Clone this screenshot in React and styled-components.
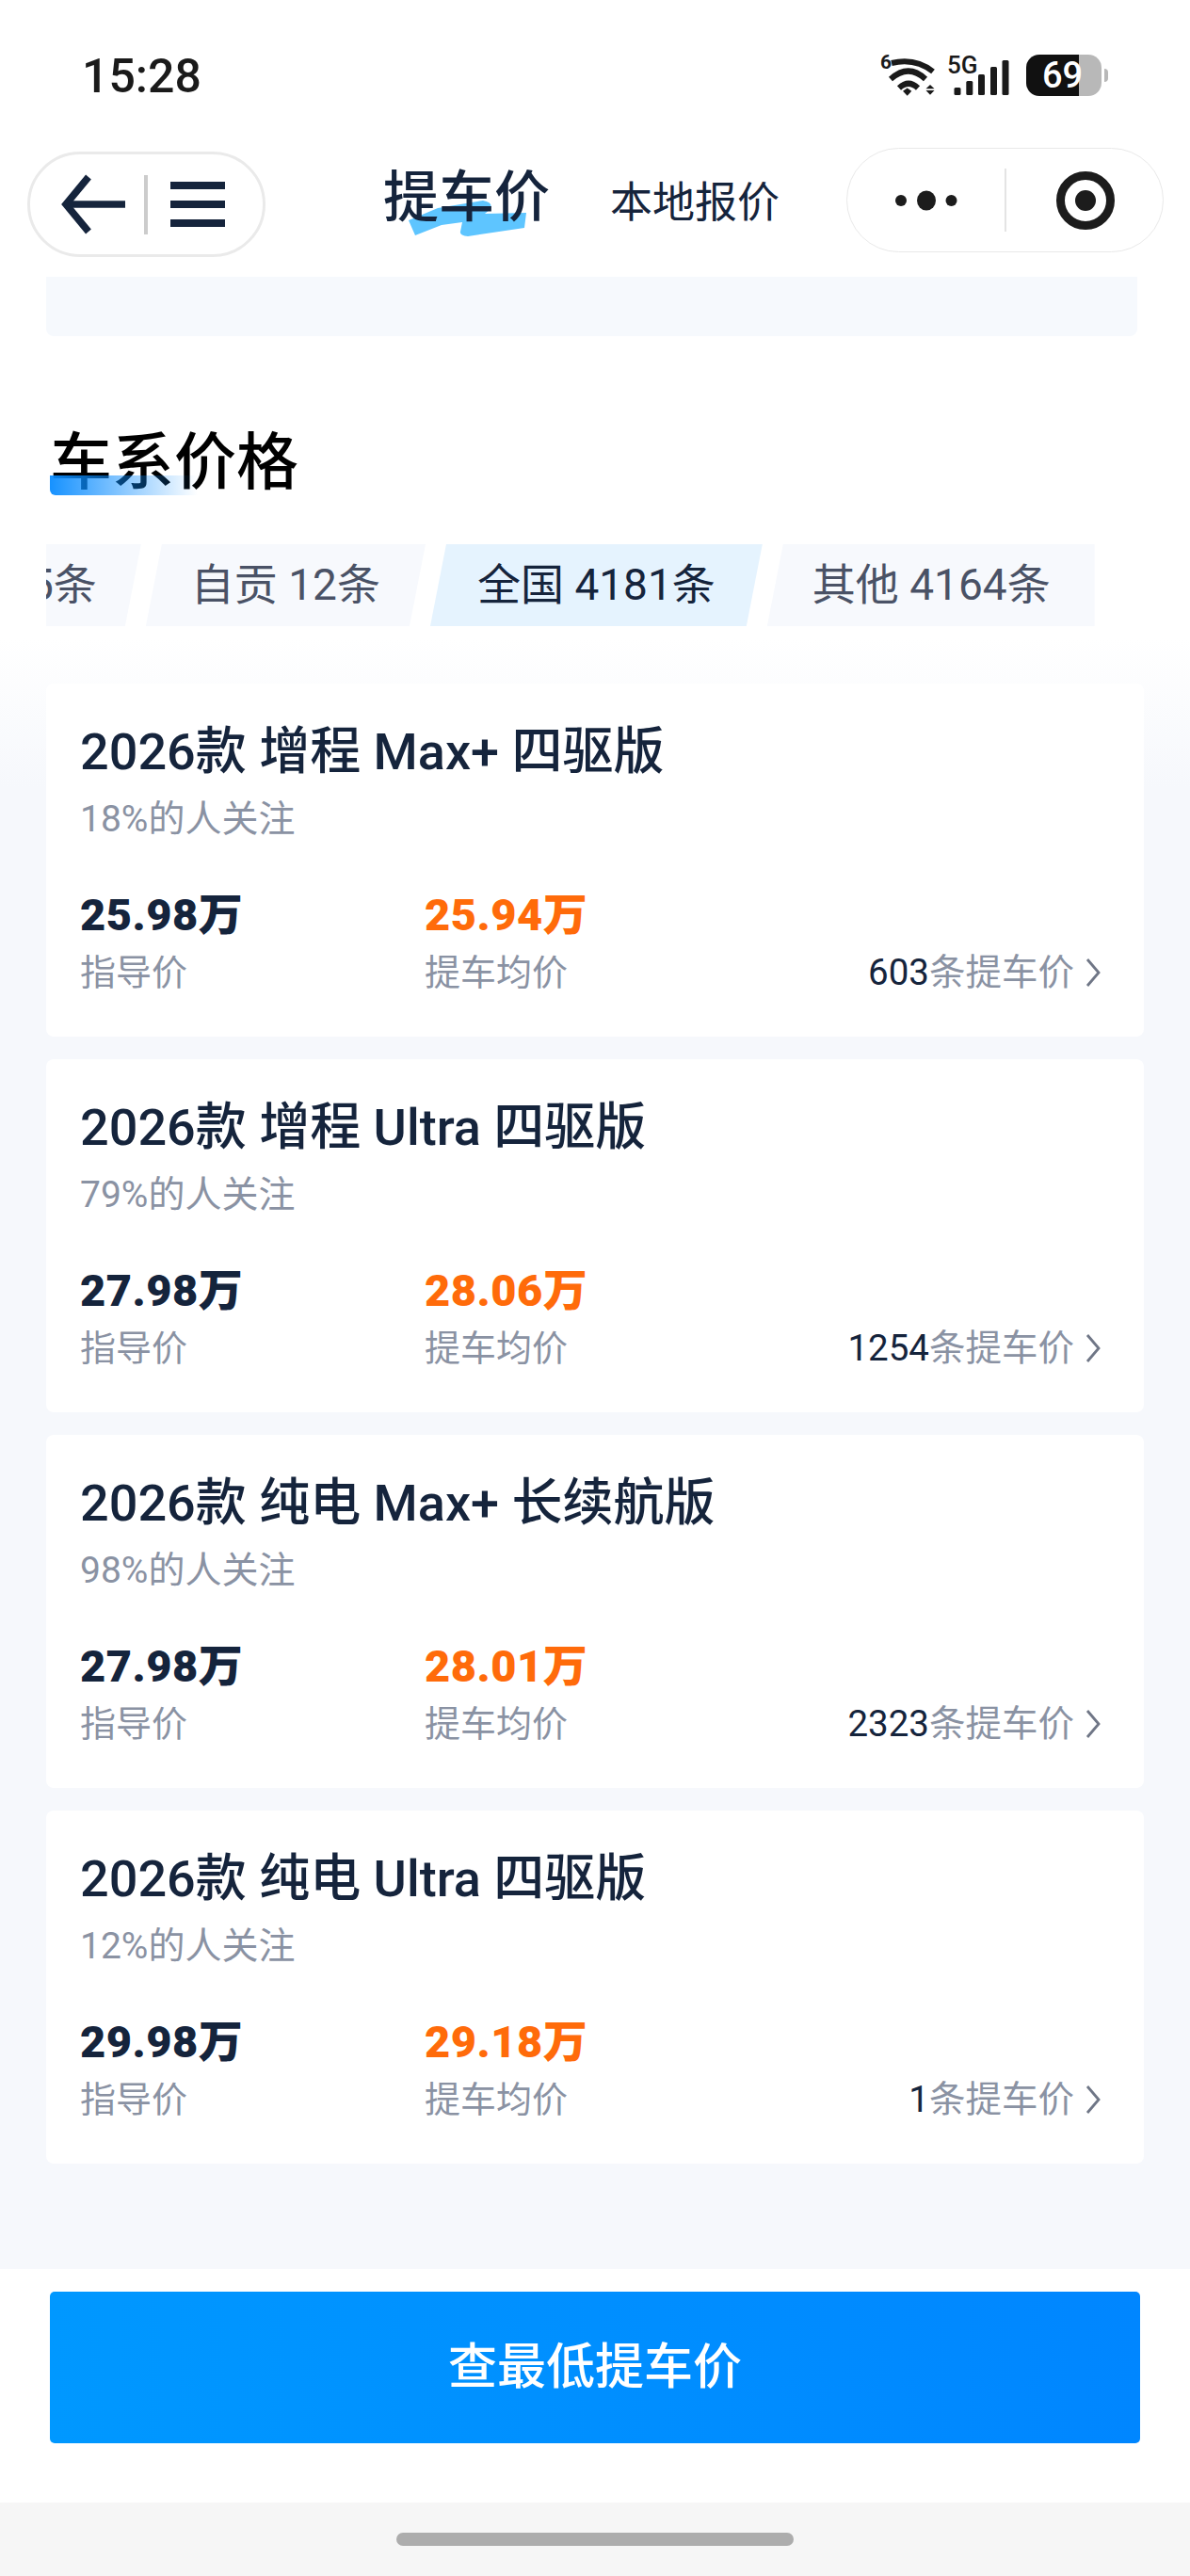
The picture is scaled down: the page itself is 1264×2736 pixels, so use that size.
import React from 'react'
import styled, {createGlobalStyle} from 'styled-components'

const FONT = `Roboto, "Noto Sans CJK SC", sans-serif`
const INK = '#15243c'
const GREY = '#8a92a3'

const GlobalStyle = createGlobalStyle`
  html, body {
    margin: 0;
    padding: 0;
    background: #fff;
  }
  * {
    box-sizing: border-box;
  }
`

const Page = styled.div`
  width: 1264px;
  height: 2736px;
  overflow: hidden;
  font-family: ${FONT};
  color: ${INK};
  background: #fff;
`

const StatusBar = styled.div`
  height: 157px;
  padding: 5px 0 0 87px;
  display: flex;
  align-items: center;
`

const Time = styled.div`
  font-size: 50px;
  font-weight: 500;
  color: #1a1a1a;
  width: 847px;
`

const StatusIcons = styled.div`
  display: flex;
  align-items: center;
  margin-top: -2px;
  svg {
    display: block;
    overflow: visible;
  }
`

const Battery = styled.div`
  position: relative;
  width: 80px;
  height: 44px;
  margin-left: 18px;
  border-radius: 14px;
  background: linear-gradient(90deg, #111 0 70%, #b8b8b8 70% 100%);
  color: #fff;
  font-size: 38px;
  font-weight: 500;
  line-height: 44px;
  padding-left: 17px;
  &::after {
    content: '';
    position: absolute;
    left: 83px;
    top: 15px;
    width: 4px;
    height: 14px;
    border-radius: 0 4px 4px 0;
    background: #b8b8b8;
  }
`

const NavBar = styled.div`
  height: 137px;
  padding-left: 29px;
  display: flex;
  align-items: flex-start;
`

const BackPill = styled.div`
  width: 253px;
  height: 112px;
  margin-top: 4px;
  border: 3px solid #eaeaea;
  border-radius: 56px;
  padding-left: 33px;
  display: flex;
  align-items: center;
`

const PillRule = styled.div`
  flex: none;
  width: ${p => p.$w}px;
  height: ${p => p.$h}px;
  background: ${p => p.$color};
  margin-left: ${p => p.$left}px;
`

const MenuSlot = styled.div`
  flex: none;
  margin-left: 24px;
  svg {
    display: block;
  }
`

const NavTitle = styled.div`
  position: relative;
  margin: 13px 0 0 125px;
  font-size: 59px;
  font-weight: 500;
  line-height: 80px;
  white-space: nowrap;
  span {
    position: relative;
  }
  svg {
    position: absolute;
    left: 27px;
    top: 40px;
  }
`

const NavLink = styled.div`
  margin: 29px 0 0 64px;
  font-size: 45px;
  line-height: 60px;
  white-space: nowrap;
`

const MenuPill = styled.div`
  width: 337px;
  height: 111px;
  margin-left: 71px;
  border: 1.5px solid #e9e9e9;
  border-radius: 56px;
  padding-left: 51px;
  display: flex;
  align-items: center;
`

const Banner = styled.div`
  height: 63px;
  margin: 0 56px 0 49px;
  background: #f6f9fd;
  border-radius: 0 0 8px 8px;
`

const Main = styled.div`
  height: 2053px;
  background: linear-gradient(180deg, #fff 0, #fff 320px, #f6f8fc 480px);
`

const SectionHead = styled.div`
  position: relative;
  width: max-content;
  margin-left: 53px;
  padding-top: 90px;
  font-size: 66px;
  font-weight: 500;
  line-height: 90px;
  color: #000;
  &::after {
    content: '';
    position: absolute;
    left: 0;
    top: 148px;
    width: 157px;
    height: 21px;
    border-radius: 0 0 0 6px;
    background: linear-gradient(90deg, #0a8cff, rgba(10, 140, 255, 0));
    opacity: 0.95;
  }
`

const TabRow = styled.div`
  display: flex;
  gap: 5px;
  height: 87px;
  margin: 41px 0 0 49px;
  overflow: hidden;
`

const Tab = styled.div`
  flex: none;
  height: 87px;
  margin-left: ${p => (p.$cut ? '-18px' : '0')};
  padding: 0 ${p => p.$right}px 0 ${p => p.$left}px;
  font-size: 46px;
  line-height: 87px;
  white-space: nowrap;
  color: ${p => (p.$active ? INK : '#4a5266')};
  background: ${p => (p.$active ? '#e5f3fe' : '#f7f9fd')};
  clip-path: ${p =>
    p.$last
      ? 'polygon(17px 0, 100% 0, 100% 100%, 0 100%)'
      : 'polygon(17px 0, 100% 0, calc(100% - 17px) 100%, 0 100%)'};
`

const CardList = styled.div`
  display: flex;
  flex-direction: column;
  gap: 24.5px;
  margin: 61px 49px 0;
`

const Card = styled.div`
  height: 374.5px;
  padding: 41px 46px 0 36px;
  background: #fff;
  border-radius: 8px;
`

const CardTitle = styled.div`
  font-size: 54px;
  font-weight: 500;
  line-height: 64px;
  white-space: pre;
`

const Muted = styled.div`
  font-size: 38px;
  line-height: 44px;
  color: ${GREY};
`

const Attention = styled(Muted)`
  margin-top: 17px;
  font-size: 39px;
`

const StatRow = styled.div`
  display: flex;
  align-items: flex-end;
  margin-top: 52px;
`

const Stat = styled.div`
  width: 366px;
`

const Price = styled.div`
  font-size: 47px;
  font-weight: 900;
  line-height: 56px;
  margin-bottom: 11px;
  letter-spacing: 0.5px;
  white-space: nowrap;
  color: ${p => (p.$hot ? '#ff6b0a' : INK)};
`

const OfferLink = styled(Muted)`
  margin-left: auto;
  display: flex;
  align-items: center;
  gap: 12px;
  font-size: 38.5px;
  b {
    font-weight: 400;
    color: ${INK};
  }
`

const Footer = styled.div`
  height: 248px;
  padding: 24px 53px 0;
  background: #fff;
`

const BuyButton = styled.div`
  height: 161px;
  border-radius: 5px;
  background: linear-gradient(90deg, #0098ff, #0086ff);
  color: #fff;
  font-size: 52px;
  font-weight: 500;
  line-height: 161px;
  text-align: center;
`

const HomeArea = styled.div`
  height: 78px;
  padding-top: 32px;
  background: #f6f6f6;
`

const HomeBar = styled.div`
  width: 422px;
  height: 14px;
  margin: 0 auto;
  border-radius: 7px;
  background: #adadad;
`

const WifiIcon = () => (
  <svg width="60" height="44" viewBox="0 0 60 44" fill="none">
    <text x="1" y="15" fontFamily="Roboto, sans-serif" fontSize="21" fontWeight="700" fill="#1a1a1a">
      6
    </text>
    <g stroke="#1a1a1a" strokeWidth="6">
      <path d="M13 9 Q38 3 57 18" />
      <path d="M12 26 Q31 9 49 26" />
      <path d="M21 35.5 Q31 26 41 35.5" />
    </g>
    <path d="M25 38.7 L29.7 35.5 L34.3 38.7 L29.7 43.7 Z" fill="#1a1a1a" />
    <path d="M49.5 36.3 L54 32 L58.5 36.3 Z M49.5 38 L58.5 38 L54 42.7 Z" fill="#1a1a1a" />
  </svg>
)

const SignalIcon = () => (
  <svg width="67" height="44" viewBox="0 0 67 44" style={{marginLeft: 11}}>
    <text x="1" y="20" fontFamily="Roboto, sans-serif" fontSize="26" fontWeight="500" fill="#1a1a1a">
      5G
    </text>
    <g fill="#1a1a1a">
      <rect x="8.5" y="35" width="7" height="8" rx="1.5" />
      <rect x="21.3" y="28" width="7" height="15" rx="1.5" />
      <rect x="34" y="21" width="7" height="22" rx="1.5" />
      <rect x="47" y="13" width="7" height="30" rx="1.5" />
      <rect x="59.5" y="6" width="7" height="37" rx="1.5" />
    </g>
  </svg>
)

const BackIcon = () => (
  <svg width="70" height="64" viewBox="0 0 70 64" fill="none" stroke={INK} strokeWidth="7.5">
    <path d="M29 3 L5 32 L29 61" />
    <path d="M5 32 H68" />
  </svg>
)

const MenuIcon = () => (
  <svg width="58" height="48" viewBox="0 0 58 48" fill={INK}>
    <rect y="0" width="58" height="8" />
    <rect y="20" width="58" height="8" />
    <rect y="40" width="58" height="8" />
  </svg>
)

const DotsIcon = () => (
  <svg width="74" height="24" viewBox="0 0 74 24" fill="#1c1c1c">
    <circle cx="6" cy="12" r="6" />
    <ellipse cx="33" cy="12" rx="10" ry="10.5" />
    <circle cx="59.5" cy="12" r="6" />
  </svg>
)

const TargetIcon = () => (
  <svg width="64" height="64" viewBox="0 0 64 64" style={{marginLeft: 52}}>
    <circle cx="32" cy="32" r="26.5" fill="none" stroke="#1c1c1c" strokeWidth="9" />
    <circle cx="32" cy="32" r="11" fill="#1c1c1c" />
  </svg>
)

const BrushMark = () => (
  <svg width="130" height="42" viewBox="0 0 130 42">
    <path
      d="M0 24 L31 11 L79 3 Q90 5 87 12 L81 17 L125 16 L123 32 L63 41 Q54 40 55 36 L57 26 L35 29 L7 40 Z"
      fill="#5ec5ff"
    />
  </svg>
)

const ChevronIcon = () => (
  <svg width="16" height="30" viewBox="0 0 16 30" fill="none" stroke="#6f7686" strokeWidth="2.8">
    <path d="M2 1 L14 15 L2 29" />
  </svg>
)

const trims = [
  {title: '2026款 增程 Max+ 四驱版', focus: '18%', msrp: '25.98万', avg: '25.94万', count: 603},
  {title: '2026款 增程 Ultra 四驱版', focus: '79%', msrp: '27.98万', avg: '28.06万', count: 1254},
  {title: '2026款 纯电 Max+ 长续航版', focus: '98%', msrp: '27.98万', avg: '28.01万', count: 2323},
  {title: '2026款 纯电 Ultra 四驱版', focus: '12%', msrp: '29.98万', avg: '29.18万', count: 1},
]

export default function App() {
  return (
    <Page>
      <GlobalStyle />
      <StatusBar>
        <Time>15:28</Time>
        <StatusIcons>
          <WifiIcon />
          <SignalIcon />
          <Battery>69</Battery>
        </StatusIcons>
      </StatusBar>
      <NavBar>
        <BackPill>
          <BackIcon />
          <PillRule $w={4} $h={63} $color="#cccccc" $left={18} />
          <MenuSlot>
            <MenuIcon />
          </MenuSlot>
        </BackPill>
        <NavTitle>
          <BrushMark />
          <span>提车价</span>
        </NavTitle>
        <NavLink>本地报价</NavLink>
        <MenuPill>
          <DotsIcon />
          <PillRule $w={1.5} $h={67} $color="#e4e4e4" $left={42} />
          <TargetIcon />
        </MenuPill>
      </NavBar>
      <Banner />
      <Main>
        <SectionHead>车系价格</SectionHead>
        <TabRow>
          <Tab $cut $left={0} $right={47}>5条</Tab>
          <Tab $left={48} $right={48}>自贡 12条</Tab>
          <Tab $active $left={50} $right={50}>全国 4181条</Tab>
          <Tab $last $left={48} $right={47}>其他 4164条</Tab>
        </TabRow>
        <CardList>
          {trims.map(trim => (
            <Card key={trim.title}>
              <CardTitle>{trim.title}</CardTitle>
              <Attention>{trim.focus}的人关注</Attention>
              <StatRow>
                <Stat>
                  <Price>{trim.msrp}</Price>
                  <Muted>指导价</Muted>
                </Stat>
                <Stat>
                  <Price $hot>{trim.avg}</Price>
                  <Muted>提车均价</Muted>
                </Stat>
                <OfferLink>
                  <span>
                    <b>{trim.count}</b>条提车价
                  </span>
                  <ChevronIcon />
                </OfferLink>
              </StatRow>
            </Card>
          ))}
        </CardList>
      </Main>
      <Footer>
        <BuyButton>查最低提车价</BuyButton>
      </Footer>
      <HomeArea>
        <HomeBar />
      </HomeArea>
    </Page>
  )
}
